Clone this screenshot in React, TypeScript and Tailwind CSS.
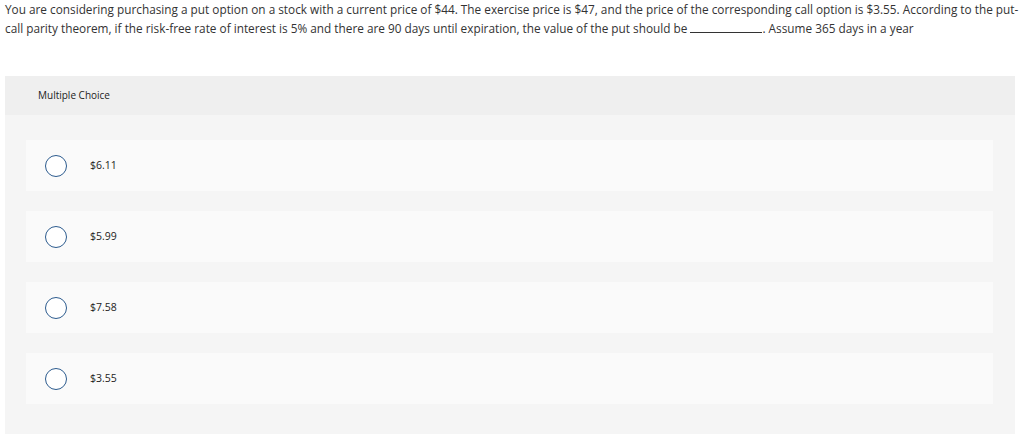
const OPTIONS = ["$6.11", "$5.99", "$7.58", "$3.55"];

export default function App() {
  return (
    <div className="min-h-[434px] bg-white text-[#333] font-['Open_Sans',sans-serif]">
      <p className="px-[5px] text-[11.8px] leading-[19px]">
        You are considering purchasing a put option on a stock with a current price of $44. The exercise price is $47, and the price of the corresponding call option is $3.55. According to the put-call parity theorem, if the risk-free rate of interest is 5% and there are 90 days until expiration, the value of the put should be{" "}
        <span className="inline-block w-[72px] border-b border-[#333] align-baseline" />. Assume 365 days in a year
      </p>

      <div className="mx-[5px] mt-[38px] w-[1010px] bg-[#f5f5f5]">
        <div className="flex h-[39px] items-center bg-[#efefef] px-[33px] text-[10px] text-[#222]">
          Multiple Choice
        </div>
        <div className="flex flex-col gap-[20px] px-[21px] pt-[25px] pb-[32px]">
          {OPTIONS.map((o) => (
            <div key={o} className="flex h-[51px] w-[967px] items-center bg-[#fafafa] pl-[19px]">
              <span className="h-[22px] w-[22px] rounded-full border border-[#2c5b8e] bg-white" />
              <span className="ml-[23px] text-[10.5px] text-[#222]">{o}</span>
            </div>
          ))}
        </div>
      </div>
    </div>
  );
}
